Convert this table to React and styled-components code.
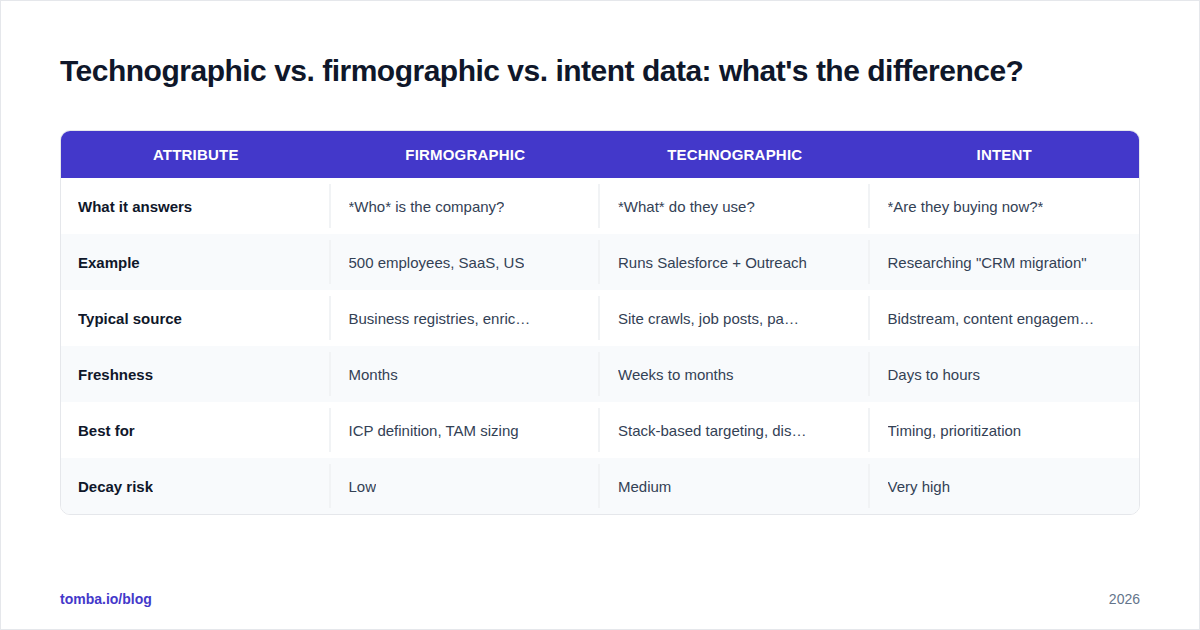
import React from 'react';
import styled, { createGlobalStyle } from 'styled-components';

const GlobalStyle = createGlobalStyle`
  html, body {
    margin: 0;
    padding: 0;
    background: #ffffff;
  }
  * {
    box-sizing: border-box;
  }
`;

const columns = ['Attribute', 'Firmographic', 'Technographic', 'Intent'];

const rows = [
  ['What it answers', '*Who* is the company?', '*What* do they use?', '*Are they buying now?*'],
  ['Example', '500 employees, SaaS, US', 'Runs Salesforce + Outreach', 'Researching "CRM migration"'],
  ['Typical source', 'Business registries, enric…', 'Site crawls, job posts, pa…', 'Bidstream, content engagem…'],
  ['Freshness', 'Months', 'Weeks to months', 'Days to hours'],
  ['Best for', 'ICP definition, TAM sizing', 'Stack-based targeting, dis…', 'Timing, prioritization'],
  ['Decay risk', 'Low', 'Medium', 'Very high'],
];

export default function App() {
  return (
    <>
      <GlobalStyle />
      <Page>
        <Title>Technographic vs. firmographic vs. intent data: what's the difference?</Title>
        <Table>
          <HeadRow>
            {columns.map((c) => (
              <HeadCell key={c}>{c}</HeadCell>
            ))}
          </HeadRow>
          {rows.map((row, i) => (
            <Row key={row[0]} striped={i % 2 === 1}>
              {row.map((cell, j) => (
                <Cell key={j} first={j === 0} last={j === row.length - 1}>
                  <CellText first={j === 0}>{cell}</CellText>
                </Cell>
              ))}
            </Row>
          ))}
        </Table>
        <Footer>
          <Brand>tomba.io/blog</Brand>
          <Year>2026</Year>
        </Footer>
      </Page>
    </>
  );
}

const Page = styled.div`
  width: 1200px;
  height: 630px;
  border: 1px solid #e5e7eb;
  padding: 52px 59px 0;
  display: flex;
  flex-direction: column;
  font-family: "Liberation Sans", Arial, sans-serif;
  background: #ffffff;
`;

const Title = styled.h1`
  margin: 0;
  font-size: 30px;
  line-height: 36px;
  font-weight: 700;
  color: #0f172a;
  letter-spacing: -0.5px;
`;

const Table = styled.div`
  margin-top: 41px;
  border: 1px solid #e5e7eb;
  border-radius: 10px;
  overflow: hidden;
`;

const HeadRow = styled.div`
  display: grid;
  grid-template-columns: repeat(4, 1fr);
  height: 47px;
  background: #4338ca;
`;

const HeadCell = styled.div`
  display: flex;
  align-items: center;
  justify-content: center;
  color: #ffffff;
  font-size: 15px;
  font-weight: 700;
  text-transform: uppercase;
  letter-spacing: 0.2px;
`;

const Row = styled.div`
  display: grid;
  grid-template-columns: repeat(4, 1fr);
  height: 56px;
  padding: 6px 0;
  background: ${(p) => (p.striped ? '#f8fafc' : '#ffffff')};
`;

const Cell = styled.div`
  display: flex;
  align-items: center;
  padding: 0 18px 0 ${(p) => (p.first ? '17px' : '18px')};
  border-right: ${(p) => (p.last ? 'none' : '2px solid #f1f3f5')};
  min-width: 0;
`;

const CellText = styled.span`
  font-size: 15px;
  font-weight: ${(p) => (p.first ? 700 : 400)};
  color: ${(p) => (p.first ? '#0f172a' : '#334155')};
  white-space: nowrap;
  overflow: hidden;
`;

const Footer = styled.div`
  margin-top: auto;
  padding: 0 0 20px;
  display: flex;
  justify-content: space-between;
  align-items: center;
  font-size: 14px;
  line-height: 20px;
`;

const Brand = styled.span`
  font-weight: 700;
  color: #4338ca;
`;

const Year = styled.span`
  color: #64748b;
`;
